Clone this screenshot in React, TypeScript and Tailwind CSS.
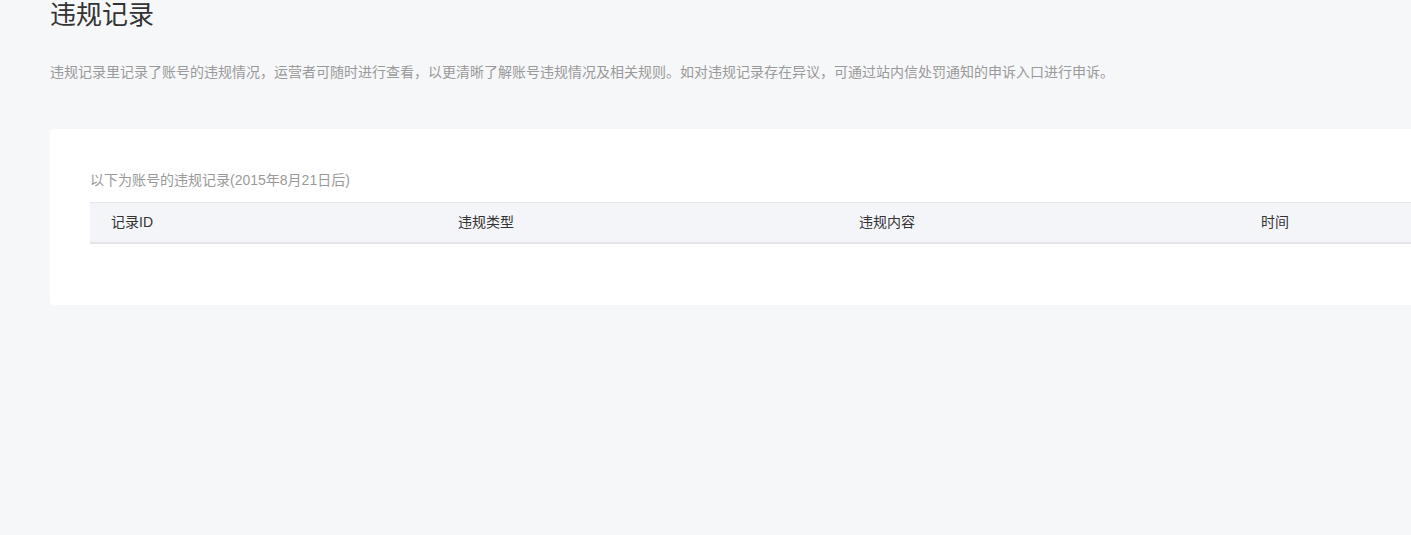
import React from 'react';

const COLUMNS = [
  { key: 'id', label: '记录ID', width: 'w-[347px]' },
  { key: 'type', label: '违规类型', width: 'w-[401px]' },
  { key: 'content', label: '违规内容', width: 'w-[402px]' },
  { key: 'time', label: '时间', width: 'w-[402px]' },
];

export default function App() {
  return (
    <div
      className="w-[1411px] min-h-[535px] overflow-hidden bg-[#f6f7f9]"
      style={{ fontFamily: '"Liberation Sans", "Noto Sans CJK SC", sans-serif' }}
    >
      <div className="pl-[50px] w-[1640px]">
        <h2 className="text-[26px] leading-[30px] text-[#333] font-normal">违规记录</h2>
        <p className="mt-[32px] text-[14px] leading-[20px] text-[#9a9a9a]">
          违规记录里记录了账号的违规情况，运营者可随时进行查看，以更清晰了解账号违规情况及相关规则。如对违规记录存在异议，可通过站内信处罚通知的申诉入口进行申诉。
        </p>

        <div className="mt-[47px] bg-white rounded-[4px] px-[40px] pt-[40px] pb-[61px]">
          <p className="text-[14px] leading-[22px] text-[#9a9a9a] mb-[11px]">
            以下为账号的违规记录(2015年8月21日后)
          </p>
          <div className="flex bg-[#f4f5f9] border-t border-[#e4e4ea] border-b-2 border-b-[#e4e4ea] h-[42px] items-center text-[14px] text-[#333]">
            {COLUMNS.map(col => (
              <div key={col.key} className={`${col.width} shrink-0 pl-[21px]`}>
                {col.label}
              </div>
            ))}
          </div>
        </div>
      </div>
    </div>
  );
}
